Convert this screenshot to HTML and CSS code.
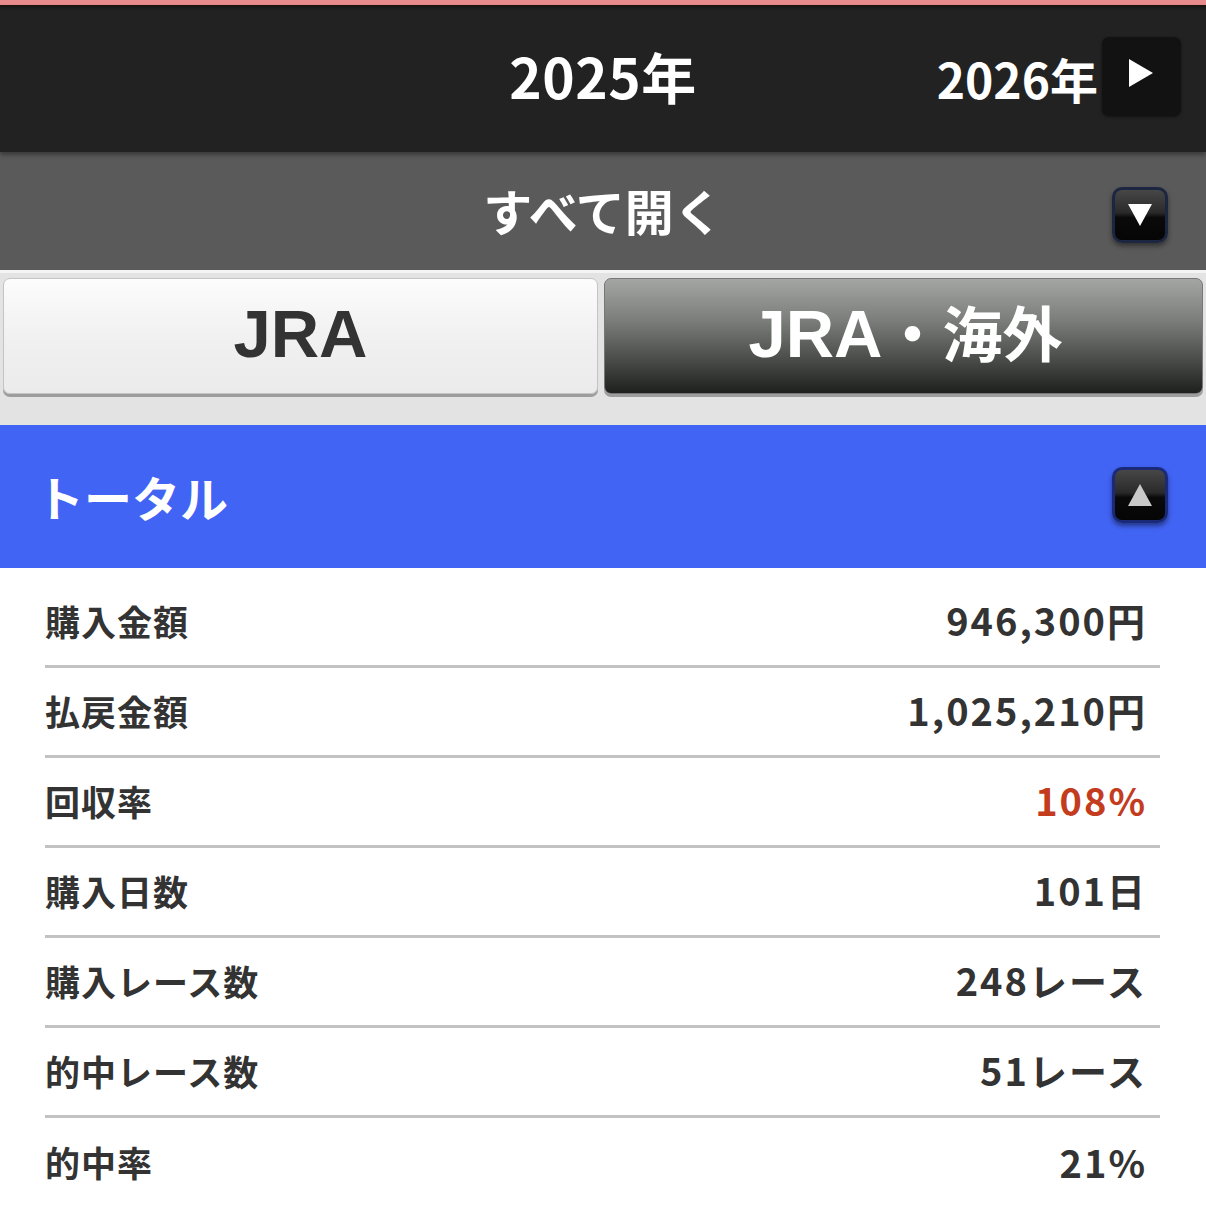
FILE: index.html
```html
<!DOCTYPE html>
<html lang="ja">
<head>
<meta charset="utf-8">
<title>成績</title>
<link rel="stylesheet" href="styles.css">
</head>
<body>
<div class="topline"></div>
<header class="yearbar">
  <div class="yb-side"></div>
  <div class="year-current">2025年</div>
  <div class="year-next">
    <span class="year-next-text">2026年</span>
    <span class="next-btn"><svg width="26" height="30" viewBox="0 0 26 30"><polygon points="1,1 25,15 1,29" fill="#fff"/></svg></span>
  </div>
</header>
<div class="openbar">
  <div class="yb-side"></div>
  <div class="open-text">すべて開く</div>
  <div class="open-right"><span class="gloss-btn"><svg width="26" height="24" viewBox="0 0 26 24"><polygon points="1,1 25,1 13,23" fill="#fff"/></svg></span></div>
</div>
<div class="tabs">
  <div class="tab tab-light">JRA</div>
  <div class="tab tab-dark">JRA<span class="tab-jp">・海外</span></div>
</div>
<section class="total-head">
  <div class="total-title">トータル</div>
  <span class="gloss-btn gloss-up"><svg width="26" height="24" viewBox="0 0 26 24"><polygon points="13,1 25,23 1,23" fill="#c9c9c9"/></svg></span>
</section>
<ul class="stats">
  <li class="row"><span class="label">購入金額</span><span class="value">946,300円</span></li>
  <li class="row"><span class="label">払戻金額</span><span class="value">1,025,210円</span></li>
  <li class="row"><span class="label">回収率</span><span class="value red">108%</span></li>
  <li class="row"><span class="label">購入日数</span><span class="value">101日</span></li>
  <li class="row"><span class="label">購入レース数</span><span class="value">248レース</span></li>
  <li class="row"><span class="label">的中レース数</span><span class="value">51レース</span></li>
  <li class="row last"><span class="label">的中率</span><span class="value">21%</span></li>
</ul>
</body>
</html>
```
FILE: styles.css
```css
* { box-sizing: border-box; }
html, body { margin: 0; padding: 0; }
body {
  width: 1206px;
  background: #fff;
  font-family: "Noto Sans CJK JP", "Noto Sans", sans-serif;
  font-weight: 700;
  overflow: hidden;
}
.topline {
  height: 5px;
  background: #e98a8c;
}
.yearbar {
  height: 147px;
  background: linear-gradient(#181212 0, #222 6px, #222 100%);
  display: grid;
  grid-template-columns: 1fr auto 1fr;
  align-items: center;
  color: #fff;
  box-shadow: 0 3px 4px rgba(0,0,0,0.35);
  position: relative;
  z-index: 2;
}
.year-current {
  font-size: 55px;
  line-height: 1;
  letter-spacing: 0.5px;
  margin-top: -6px;
}
.year-next {
  justify-self: end;
  display: flex;
  align-items: center;
  padding-right: 25px;
  margin-top: -4px;
}
.year-next-text {
  font-size: 48px;
  line-height: 1;
  margin-top: 2px;
}
.next-btn {
  width: 79px;
  height: 79px;
  margin-left: 4px;
  background: #121212;
  border-radius: 7px;
  box-shadow: 0 1px 3px rgba(0,0,0,0.5);
  display: flex;
  align-items: center;
  justify-content: center;
  padding-right: 2px;
  padding-bottom: 8px;
}
.openbar {
  height: 121px;
  background: #5a5a5a;
  display: grid;
  grid-template-columns: 1fr auto 1fr;
  align-items: center;
  color: #fff;
  border-bottom: 3px solid #f4f4f4;
}
.open-text {
  font-size: 49px;
  line-height: 1;
  margin-top: -4px;
}
.open-right {
  justify-self: end;
  padding-right: 38px;
  padding-top: 8px;
}
.gloss-btn {
  width: 56px;
  height: 56px;
  border-radius: 10px;
  border: 3px solid #1c2640;
  background: linear-gradient(#474747 0%, #2a2a2a 45%, #0a0a0a 55%, #050505 100%);
  box-shadow: 0 3px 5px rgba(0,0,0,0.45);
  display: flex;
  align-items: center;
  justify-content: center;
}
.tabs {
  background: #e3e3e3;
  height: 152px;
  padding: 5px 3px 0;
  display: flex;
  gap: 6px;
  align-items: flex-start;
}
.tab {
  flex: 1;
  height: 116px;
  border-radius: 7px;
  display: flex;
  align-items: center;
  justify-content: center;
  font-family: "Liberation Sans", "Noto Sans CJK JP", sans-serif;
  font-size: 67px;
  line-height: 1;
  padding-bottom: 6px;
}
.tab-light {
  background: linear-gradient(#fcfcfc 0%, #f1f1f1 50%, #ebebeb 100%);
  border: 1px solid #c4c4c4;
  box-shadow: 0 3px 0 #9d9d9d;
  color: #333;
}
.tab-dark {
  background: linear-gradient(#a3a6a2 0%, #7c7f7b 35%, #4a4d49 70%, #1d201d 100%);
  border: 1px solid #777;
  box-shadow: 0 3px 0 #9d9d9d;
  color: #fff;
  padding-left: 4px;
}
.tab-jp {
  font-family: "Noto Sans CJK JP", sans-serif;
  font-size: 60px;
  margin-top: -4px;
}
.total-head {
  height: 143px;
  background: #4264f5;
  display: flex;
  align-items: center;
  justify-content: space-between;
  padding: 0 38px 0 36px;
  color: #fff;
}
.total-title {
  font-size: 48px;
  line-height: 1;
  margin-top: -2px;
}
.gloss-up {
  border-color: #1a2a78;
  margin-top: -4px;
}
.stats {
  list-style: none;
  margin: 0;
  padding: 10px 46px 0 45px;
}
.row {
  height: 90px;
  border-bottom: 3px solid #c2c2c2;
  display: flex;
  align-items: center;
  justify-content: space-between;
  padding: 0 13px 3px 0;
  color: #333;
}
.row.last { border-bottom: none; }
.label {
  font-size: 35px;
  line-height: 1;
  letter-spacing: 1px;
}
.value {
  font-size: 38px;
  line-height: 1;
  letter-spacing: 2px;
}
.value.red { color: #c43c1e; }
```
